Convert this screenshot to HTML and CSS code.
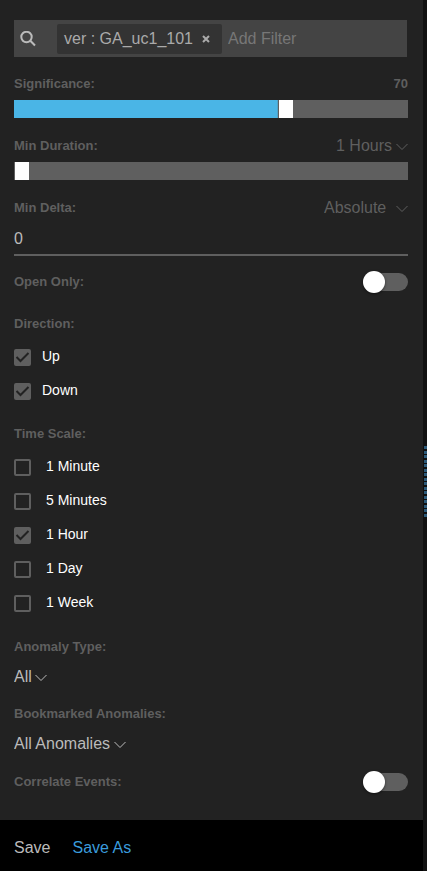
FILE: index.html
```html
<!DOCTYPE html>
<html lang="en">
<head>
<meta charset="utf-8">
<meta name="viewport" content="width=device-width, initial-scale=1">
<title>Anomaly filters</title>
<link rel="stylesheet" href="styles.css">
</head>
<body>
<form class="panel">
  <div class="filters">
    <div class="search">
      <svg class="search-icon" viewBox="0 0 16 16" aria-hidden="true"><circle cx="6.5" cy="6" r="5.2"/><path d="M10.3 9.8 15 14.5"/></svg>
      <span class="chip">ver : GA_uc1_101
        <button type="button" class="chip-close" aria-label="Remove filter"><svg viewBox="0 0 8 8" aria-hidden="true"><path d="M1 1 7 7M7 1 1 7"/></svg></button>
      </span>
      <input class="search-input" type="text" placeholder="Add Filter" aria-label="Add Filter">
    </div>

    <div class="head">
      <label class="title" for="significance">Significance:</label>
      <output class="title" for="significance">70</output>
    </div>
    <input class="slider" id="significance" type="range" min="0" max="100" step="any" value="69.6" style="--value: 0.696">

    <div class="head">
      <label class="title" for="duration">Min Duration:</label>
      <span class="picker muted">
        <select aria-label="Duration unit"><option>1 Hours</option></select>
        <svg class="chevron" viewBox="0 0 12 8" aria-hidden="true"><path d="M.5 1 6 6.5 11.5 1"/></svg>
      </span>
    </div>
    <input class="slider" id="duration" type="range" min="0" max="100" value="0" style="--value: 0">

    <div class="head">
      <label class="title" for="delta">Min Delta:</label>
      <span class="picker muted wide">
        <select aria-label="Delta type"><option>Absolute</option></select>
        <svg class="chevron" viewBox="0 0 12 8" aria-hidden="true"><path d="M.5 1 6 6.5 11.5 1"/></svg>
      </span>
    </div>
    <input class="number" id="delta" type="text" inputmode="numeric" value="0">

    <div class="switch-row">
      <label class="title" for="open-only">Open Only:</label>
      <input class="switch" id="open-only" type="checkbox" role="switch">
    </div>

    <fieldset class="group direction">
      <legend class="title">Direction:</legend>
      <label class="option"><span class="box"><input type="checkbox" checked><svg viewBox="0 0 17 17" aria-hidden="true"><path d="M2.5 8 6.5 12 14.5 4"/></svg></span>Up</label>
      <label class="option"><span class="box"><input type="checkbox" checked><svg viewBox="0 0 17 17" aria-hidden="true"><path d="M2.5 8 6.5 12 14.5 4"/></svg></span>Down</label>
    </fieldset>

    <fieldset class="group scale">
      <legend class="title">Time Scale:</legend>
      <label class="option"><span class="box"><input type="checkbox"></span>1 Minute</label>
      <label class="option"><span class="box"><input type="checkbox"></span>5 Minutes</label>
      <label class="option"><span class="box"><input type="checkbox" checked><svg viewBox="0 0 17 17" aria-hidden="true"><path d="M2.5 8 6.5 12 14.5 4"/></svg></span>1 Hour</label>
      <label class="option"><span class="box"><input type="checkbox"></span>1 Day</label>
      <label class="option"><span class="box"><input type="checkbox"></span>1 Week</label>
    </fieldset>

    <div class="choice">
      <label class="title" for="type">Anomaly Type:</label>
      <span class="picker">
        <select id="type"><option>All</option></select>
        <svg class="chevron" viewBox="0 0 12 8" aria-hidden="true"><path d="M.5 1 6 6.5 11.5 1"/></svg>
      </span>
    </div>

    <div class="choice">
      <label class="title" for="bookmarked">Bookmarked Anomalies:</label>
      <span class="picker">
        <select id="bookmarked"><option>All Anomalies</option></select>
        <svg class="chevron" viewBox="0 0 12 8" aria-hidden="true"><path d="M.5 1 6 6.5 11.5 1"/></svg>
      </span>
    </div>

    <div class="switch-row last">
      <label class="title" for="correlate">Correlate Events:</label>
      <input class="switch" id="correlate" type="checkbox" role="switch">
    </div>
  </div>

  <footer class="actions">
    <button type="submit">Save</button>
    <button type="button" class="accent">Save As</button>
  </footer>
</form>
<div class="gutter"><div class="grip"></div></div>
</body>
</html>
```
FILE: styles.css
```css
* {
  box-sizing: border-box;
}

body {
  display: flex;
  min-height: 100vh;
  margin: 0;
  background: #111;
  color: #fff;
  font-family: "Liberation Sans", Arial, sans-serif;
  font-size: 14px;
}

input,
select,
button {
  appearance: none;
  margin: 0;
  padding: 0;
  border: 0;
  background: none;
  color: inherit;
  font: inherit;
}

svg {
  display: block;
  fill: none;
  stroke: currentColor;
}

.panel {
  display: flex;
  flex: 1;
  flex-direction: column;
  background: #222;
}

.filters {
  flex: 1;
  padding: 20px 15px 29px 14px;
}

.search {
  display: flex;
  align-items: center;
  height: 37px;
  margin-right: 1px;
  padding: 0 6px;
  background: #444;
  font-size: 16px;
}

.search-icon {
  flex: none;
  width: 16px;
  height: 16px;
  margin-right: 21px;
  color: #bbb;
  stroke-width: 2;
}

.chip {
  display: flex;
  flex: none;
  align-items: center;
  height: 30px;
  padding: 0 12px 0 7px;
  border-radius: 2px;
  background: #333;
  color: #aaa;
}

.chip-close {
  margin-left: 9px;
}

.chip-close svg {
  width: 8px;
  height: 8px;
  stroke-width: 2;
}

.search-input {
  flex: 1;
  min-width: 0;
  padding-left: 6px;
}

.search-input::placeholder {
  color: #777;
  opacity: 1;
}

.title {
  padding: 0;
  color: #5f5f5f;
  font-size: 13px;
  font-weight: bold;
  line-height: 18px;
}

.head {
  display: flex;
  align-items: center;
  justify-content: space-between;
  margin: 18px 0 7px;
}

.slider {
  display: block;
  width: 100%;
  height: 18px;
  background: linear-gradient(#4ab5e6, #4ab5e6) 0 0 / calc((100% - 15px) * var(--value)) 100% no-repeat #5f5f5f;
}

.slider::-webkit-slider-thumb {
  appearance: none;
  width: 15px;
  height: 18px;
  border-left: 1px solid #5f5f5f;
  background: #fff;
}

.picker {
  display: flex;
  align-items: center;
  width: max-content;
  gap: 3px;
  color: #bbb;
  font-size: 16px;
}

.picker select {
  height: 19px;
  line-height: 19px;
}

.picker.muted {
  color: #5f5f5f;
}

.picker.wide {
  gap: 9px;
}

.chevron {
  width: 12px;
  height: 8px;
  margin-top: 3px;
}

.number {
  display: block;
  width: 100%;
  height: 32px;
  border-bottom: 2px solid #5f5f5f;
  color: #bbb;
  font-size: 16px;
}

.switch-row {
  display: flex;
  align-items: center;
  justify-content: space-between;
  margin-top: 17px;
}

.switch-row.last {
  margin-top: 20px;
}

.switch {
  display: flex;
  align-items: center;
  width: 45px;
  height: 18px;
  border-radius: 9px;
  background: #5f5f5f;
}

.switch::before {
  content: "";
  flex: none;
  width: 22px;
  height: 22px;
  border-radius: 50%;
  background: #fff;
  box-shadow: 0 1px 3px rgba(0, 0, 0, 0.5);
}

.switch:checked {
  justify-content: flex-end;
}

.group {
  min-width: 0;
  margin: 24px 0 0;
  padding: 0;
  border: 0;
}

.group.scale {
  margin-top: 17px;
}

.group legend {
  margin-bottom: 7px;
}

.option {
  display: flex;
  align-items: center;
  height: 34px;
  gap: 11px;
  line-height: 18px;
  padding-bottom: 2px;
}

.scale .option {
  gap: 15px;
}

.box {
  display: grid;
  margin-top: 2px;
}

.box > * {
  grid-area: 1 / 1;
  width: 17px;
  height: 17px;
}

.box input {
  border: 2px solid #5f5f5f;
  border-radius: 2px;
}

.box input:checked {
  background: #5f5f5f;
}

.box svg {
  color: #222;
  stroke-width: 2;
  pointer-events: none;
}

.choice {
  display: grid;
  gap: 11px;
  margin-top: 19px;
}

.scale + .choice {
  margin-top: 18px;
}

.actions {
  display: flex;
  align-items: center;
  height: 51px;
  gap: 22px;
  padding: 4px 14px 0;
  background: #000;
  color: #bbb;
  font-size: 16px;
}

.actions .accent {
  color: #3a9bdc;
}

.gutter {
  width: 4px;
  padding: 446px 0 0 1px;
}

.grip {
  height: 71px;
  background: repeating-linear-gradient(#2c5a7a 0 3px, #111 3px 5px, #2c5a7a 5px 8px, #111 8px 9px);
}
```
